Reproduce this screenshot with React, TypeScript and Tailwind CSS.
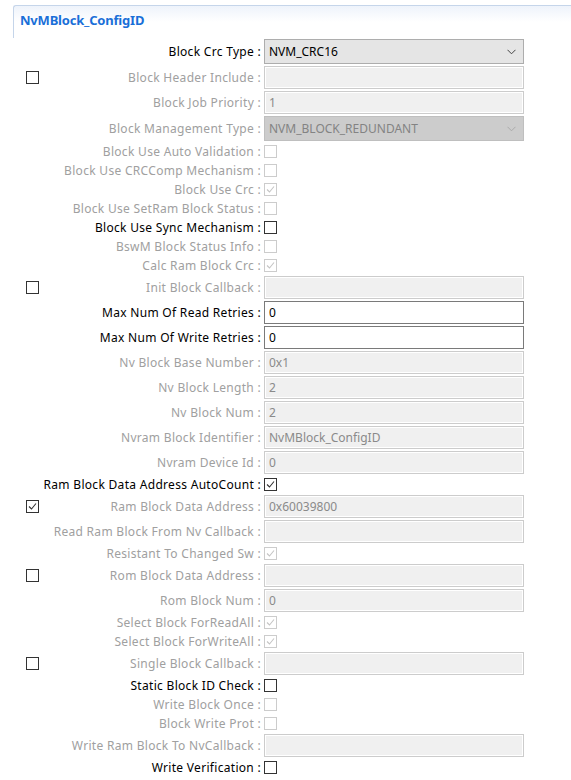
type Field =
  | { kind: 'select'; label: string; value: string; enabled: boolean }
  | { kind: 'input'; label: string; value?: string; enabled: boolean; side?: 'off' | 'on' }
  | { kind: 'check'; label: string; checked?: boolean; enabled: boolean };

const fields: Field[] = [
  { kind: 'select', label: 'Block Crc Type', value: 'NVM_CRC16', enabled: true },
  { kind: 'input', label: 'Block Header Include', enabled: false, side: 'off' },
  { kind: 'input', label: 'Block Job Priority', value: '1', enabled: false },
  { kind: 'select', label: 'Block Management Type', value: 'NVM_BLOCK_REDUNDANT', enabled: false },
  { kind: 'check', label: 'Block Use Auto Validation', enabled: false },
  { kind: 'check', label: 'Block Use CRCComp Mechanism', enabled: false },
  { kind: 'check', label: 'Block Use Crc', checked: true, enabled: false },
  { kind: 'check', label: 'Block Use SetRam Block Status', enabled: false },
  { kind: 'check', label: 'Block Use Sync Mechanism', enabled: true },
  { kind: 'check', label: 'BswM Block Status Info', enabled: false },
  { kind: 'check', label: 'Calc Ram Block Crc', checked: true, enabled: false },
  { kind: 'input', label: 'Init Block Callback', enabled: false, side: 'off' },
  { kind: 'input', label: 'Max Num Of Read Retries', value: '0', enabled: true },
  { kind: 'input', label: 'Max Num Of Write Retries', value: '0', enabled: true },
  { kind: 'input', label: 'Nv Block Base Number', value: '0x1', enabled: false },
  { kind: 'input', label: 'Nv Block Length', value: '2', enabled: false },
  { kind: 'input', label: 'Nv Block Num', value: '2', enabled: false },
  { kind: 'input', label: 'Nvram Block Identifier', value: 'NvMBlock_ConfigID', enabled: false },
  { kind: 'input', label: 'Nvram Device Id', value: '0', enabled: false },
  { kind: 'check', label: 'Ram Block Data Address AutoCount', checked: true, enabled: true },
  { kind: 'input', label: 'Ram Block Data Address', value: '0x60039800', enabled: false, side: 'on' },
  { kind: 'input', label: 'Read Ram Block From Nv Callback', enabled: false },
  { kind: 'check', label: 'Resistant To Changed Sw', checked: true, enabled: false },
  { kind: 'input', label: 'Rom Block Data Address', enabled: false, side: 'off' },
  { kind: 'input', label: 'Rom Block Num', value: '0', enabled: false },
  { kind: 'check', label: 'Select Block ForReadAll', checked: true, enabled: false },
  { kind: 'check', label: 'Select Block ForWriteAll', checked: true, enabled: false },
  { kind: 'input', label: 'Single Block Callback', enabled: false, side: 'off' },
  { kind: 'check', label: 'Static Block ID Check', enabled: true },
  { kind: 'check', label: 'Write Block Once', enabled: false },
  { kind: 'check', label: 'Block Write Prot', enabled: false },
  { kind: 'input', label: 'Write Ram Block To NvCallback', enabled: false },
  { kind: 'check', label: 'Write Verification', enabled: true },
];

function CheckBox({ checked, enabled }: { checked?: boolean; enabled: boolean }) {
  return (
    <span
      className={`flex w-[13px] h-[13px] items-center justify-center border bg-white ${
        enabled ? 'border-[#333333]' : 'border-[#cccccc]'
      }`}
    >
      {checked && (
        <svg width="11" height="11" viewBox="0 0 11 11" fill="none">
          <polyline
            points="2,5.5 4.5,8 9,2.5"
            stroke={enabled ? '#333333' : '#c4c4c4'}
            strokeWidth="1.1"
          />
        </svg>
      )}
    </span>
  );
}

function Chevron({ enabled }: { enabled: boolean }) {
  return (
    <svg width="9" height="6" viewBox="0 0 9 6" fill="none">
      <polyline points="0.5,0.8 4.5,4.8 8.5,0.8" stroke={enabled ? '#444444' : '#aaaaaa'} strokeWidth="1" />
    </svg>
  );
}

function Control({ field }: { field: Field }) {
  if (field.kind === 'select') {
    return (
      <div
        className={`flex h-[25px] w-[260px] items-center justify-between border pl-[4px] pr-[7px] ${
          field.enabled
            ? 'border-[#adadad] bg-[#e5e5e5] text-black'
            : 'border-[#bfbfbf] bg-[#cccccc] text-[#838383]'
        }`}
      >
        <span>{field.value}</span>
        <Chevron enabled={field.enabled} />
      </div>
    );
  }
  if (field.kind === 'input') {
    return (
      <div
        className={`flex h-[23px] w-[260px] items-center border px-[4px] ${
          field.enabled
            ? 'border-[#7a7a7a] bg-white text-black'
            : 'border-[#cccccc] bg-[#f0f0f0] text-[#8a8a8a] shadow-[inset_0_0_0_1px_#ffffff]'
        }`}
      >
        {field.value}
      </div>
    );
  }
  return <CheckBox checked={field.checked} enabled={field.enabled} />;
}

function Row({ field }: { field: Field }) {
  const h = field.kind === 'select' ? 'h-[27px]' : field.kind === 'input' ? 'h-[25px]' : 'h-[19px]';
  const side = field.kind === 'input' ? field.side : undefined;
  return (
    <div className={`flex items-center ${h}`}>
      <div className="flex w-[44px] shrink-0 pl-[26px]">
        {side && <CheckBox checked={side === 'on'} enabled={true} />}
      </div>
      <div
        className={`flex w-[217px] shrink-0 justify-end whitespace-nowrap tracking-[0.3px] ${
          field.enabled ? 'text-black' : 'text-[#a0a0a0]'
        }`}
      >
        {field.label} :
      </div>
      <div className="ml-[3px] flex">
        <Control field={field} />
      </div>
    </div>
  );
}

export default function App() {
  return (
    <div className="h-[780px] w-[571px] overflow-hidden bg-white font-['Noto_Sans',sans-serif] text-[12px] leading-none">
      <div className="h-[5px]" />
      <div className="ml-[13px] h-[33px] rounded-tl-[3px] border-l border-t border-[#c5d5ea] bg-gradient-to-b from-[#eef3fb] via-white to-white">
        <div className="pl-[6px] pt-[6px] text-[13px] font-bold leading-[16px] tracking-[-0.2px] text-[#1a6fd8]">
          NvMBlock_ConfigID
        </div>
      </div>
      {fields.map((f) => (
        <Row key={f.label} field={f} />
      ))}
    </div>
  );
}
